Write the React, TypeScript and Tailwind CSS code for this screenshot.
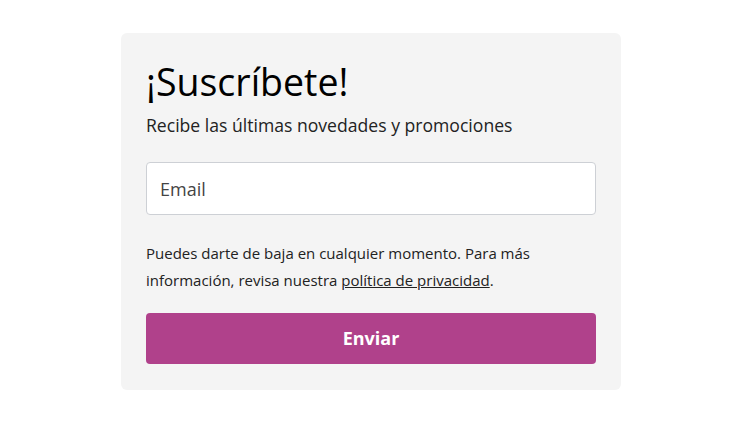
import React from "react";

export default function App() {
  return (
    <div className="min-h-[443px] w-full bg-white pt-[33px] font-['Open_Sans',sans-serif]">
      <div className="ml-[121px] w-[500px] rounded-[6px] bg-[#f4f4f4] px-[25px] pt-[25px] pb-[26px]">
        <h2 className="text-[37.5px] leading-[48px] font-normal text-black">¡Suscríbete!</h2>
        <p className="mt-[6px] text-[17.6px] leading-[27px] text-[#222]">
          Recibe las últimas novedades y promociones
        </p>
        <input
          type="email"
          placeholder="Email"
          className="mt-[23px] block h-[53px] w-full rounded-[4px] border border-[#cdd0d5] bg-white px-[13px] text-[18px] text-[#333] placeholder:text-[#444] outline-none"
        />
        <p className="mt-[25px] text-[15px] leading-[27px] text-[#222]">
          Puedes darte de baja en cualquier momento. Para más información, revisa nuestra{" "}
          <a href="#" className="underline">
            política de privacidad
          </a>
          .
        </p>
        <button className="mt-[19px] flex h-[51px] w-full items-center justify-center rounded-[4px] bg-[#b0418b] text-[18px] font-bold text-white">
          Enviar
        </button>
      </div>
    </div>
  );
}
